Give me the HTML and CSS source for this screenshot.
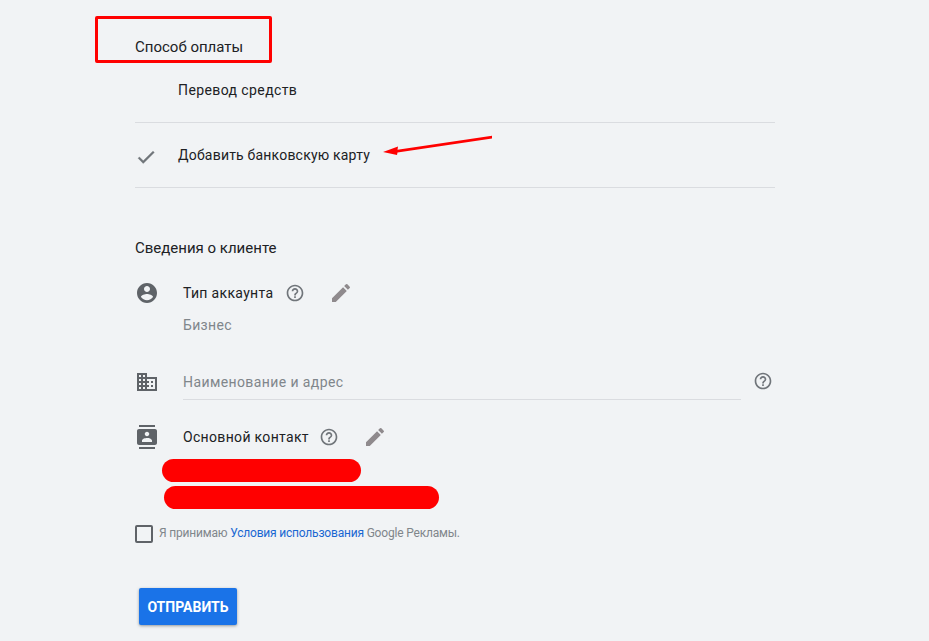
FILE: index.html
```html
<!DOCTYPE html>
<html lang="en">
  <head>
    <meta charset="UTF-8">
    <meta name="viewport" content="width=device-width, initial-scale=1.0"/>
    <title>Способ оплаты</title>
    <link rel="stylesheet" href="styles.css">
  </head>
  <body>
    <main class="page">
      <h2 class="section-title pay-title">Способ оплаты</h2>
      <div class="pay-option first">
        <span class="pay-check"></span>
        <span class="transfer-label">Перевод средств</span>
      </div>
      <div class="pay-option selected">
        <span class="pay-check">
          <svg width="22" height="22" viewBox="0 0 24 24"><path d="M9 16.2 4.8 12l-1.4 1.4L9 19 21 7l-1.4-1.4z" fill="#70757a" stroke="#70757a" stroke-width=".5"/></svg>
        </span>
        <span class="card-label">Добавить банковскую карту</span>
      </div>

      <h2 class="section-title client-title">Сведения о клиенте</h2>

      <div class="field account">
        <svg class="field-icon" width="24" height="24" viewBox="0 0 24 24"><path d="M12 2C6.48 2 2 6.48 2 12s4.48 10 10 10 10-4.48 10-10S17.52 2 12 2zm0 3c1.66 0 3 1.34 3 3s-1.34 3-3 3-3-1.34-3-3 1.34-3 3-3zm0 14.2c-2.5 0-4.71-1.28-6-3.22.03-1.99 4-3.08 6-3.08 1.99 0 5.97 1.09 6 3.08-1.29 1.94-3.5 3.22-6 3.22z" fill="#5f6368"/></svg>
        <span class="field-label">Тип аккаунта</span>
        <svg class="help" width="20" height="20" viewBox="0 0 24 24"><path d="M11 18h2v-2h-2v2zm1-16C6.48 2 2 6.48 2 12s4.48 10 10 10 10-4.48 10-10S17.52 2 12 2zm0 18c-4.41 0-8-3.59-8-8s3.59-8 8-8 8 3.59 8 8-3.59 8-8 8zm0-14c-2.21 0-4 1.79-4 4h2c0-1.1.9-2 2-2s2 .9 2 2c0 2-3 1.75-3 5h2c0-2.25 3-2.5 3-5 0-2.21-1.79-4-4-4z" fill="#70757a"/></svg>
        <svg class="edit" width="24" height="24" viewBox="0 0 24 24"><path d="M3 17.25V21h3.75L17.81 9.94l-3.75-3.75L3 17.25zM20.71 7.04a1 1 0 0 0 0-1.41l-2.34-2.34a1 1 0 0 0-1.41 0l-1.83 1.83 3.75 3.75 1.83-1.83z" fill="#8f8a8d"/></svg>
      </div>
      <p class="field-value">Бизнес</p>

      <div class="field name-row">
        <svg class="field-icon" width="24" height="24" viewBox="0 0 24 24"><path d="M12 7V3H2v18h20V7H12zM6 19H4v-2h2v2zm0-4H4v-2h2v2zm0-4H4V9h2v2zm0-4H4V5h2v2zm4 12H8v-2h2v2zm0-4H8v-2h2v2zm0-4H8V9h2v2zm0-4H8V5h2v2zm10 12h-8v-2h2v-2h-2v-2h2v-2h-2V9h8v10zm-2-8h-2v2h2v-2zm0 4h-2v2h2v-2z" fill="#5f6368"/></svg>
        <div class="name-input">Наименование и адрес</div>
        <svg class="help name-help" width="20" height="20" viewBox="0 0 24 24"><path d="M11 18h2v-2h-2v2zm1-16C6.48 2 2 6.48 2 12s4.48 10 10 10 10-4.48 10-10S17.52 2 12 2zm0 18c-4.41 0-8-3.59-8-8s3.59-8 8-8 8 3.59 8 8-3.59 8-8 8zm0-14c-2.21 0-4 1.79-4 4h2c0-1.1.9-2 2-2s2 .9 2 2c0 2-3 1.75-3 5h2c0-2.25 3-2.5 3-5 0-2.21-1.79-4-4-4z" fill="#70757a"/></svg>
      </div>

      <div class="field contact">
        <svg class="field-icon" width="24" height="24" viewBox="0 0 24 24"><path d="M20 0H4v2h16V0zM4 24h16v-2H4v2zM20 4H4c-1.1 0-2 .9-2 2v12c0 1.1.9 2 2 2h16c1.1 0 2-.9 2-2V6c0-1.1-.9-2-2-2zm-8 2.75c1.24 0 2.25 1.01 2.25 2.25s-1.01 2.25-2.25 2.25S9.75 10.24 9.75 9 10.76 6.75 12 6.75zM17 17H7v-1.5c0-1.67 3.33-2.5 5-2.5s5 .83 5 2.5V17z" fill="#5f6368"/></svg>
        <span class="field-label contact-label">Основной контакт</span>
        <svg class="help" width="20" height="20" viewBox="0 0 24 24"><path d="M11 18h2v-2h-2v2zm1-16C6.48 2 2 6.48 2 12s4.48 10 10 10 10-4.48 10-10S17.52 2 12 2zm0 18c-4.41 0-8-3.59-8-8s3.59-8 8-8 8 3.59 8 8-3.59 8-8 8zm0-14c-2.21 0-4 1.79-4 4h2c0-1.1.9-2 2-2s2 .9 2 2c0 2-3 1.75-3 5h2c0-2.25 3-2.5 3-5 0-2.21-1.79-4-4-4z" fill="#70757a"/></svg>
        <svg class="edit" width="24" height="24" viewBox="0 0 24 24"><path d="M3 17.25V21h3.75L17.81 9.94l-3.75-3.75L3 17.25zM20.71 7.04a1 1 0 0 0 0-1.41l-2.34-2.34a1 1 0 0 0-1.41 0l-1.83 1.83 3.75 3.75 1.83-1.83z" fill="#8f8a8d"/></svg>
      </div>

      <label class="terms">
        <span class="checkbox"></span>
        <span>Я принимаю <a href="#">Условия использования</a> Google Рекламы.</span>
      </label>

      <button class="submit">ОТПРАВИТЬ</button>
    </main>

    <!-- red marks drawn over the screenshot -->
    <div class="mark-box"></div>
    <div class="scribble one"></div>
    <div class="scribble two"></div>
    <svg class="mark-arrow" width="112" height="30" viewBox="0 0 112 30">
      <path d="M0 22 15 16.5 14.5 19.8 109 5.8v2.8L14.5 22.6 14 25z" fill="#f00"/>
    </svg>
  </body>
</html>
```

FILE: styles.css
```css
html, body {
  margin: 0;
  height: 641px;
  overflow: hidden;
}
body {
  background-color: #f1f3f5;
  color: #202124;
  font-family: Roboto, "Noto Sans", sans-serif;
  font-size: 14px;
  letter-spacing: 0.33px;
  position: relative;
}
.page {
  width: 640px;
  margin-left: 135px;
}
.section-title {
  margin: 0;
  font-size: 15px;
  font-weight: 400;
  line-height: 20px;
  letter-spacing: 0;
}
.pay-title {
  padding-top: 37px;
}
.pay-option {
  display: flex;
  align-items: center;
  height: 64px;
  border-bottom: 1px solid #dadce0;
}
.pay-option.first {
  height: 65px;
}
.pay-check {
  display: flex;
  width: 43px;
}
.pay-check svg {
  margin-top: 3px;
}
.transfer-label {
  letter-spacing: 0.4px;
}
.card-label {
  letter-spacing: 0.2px;
}
.client-title {
  margin-top: 50px;
}
.field {
  display: flex;
  align-items: center;
}
.field-icon {
  flex: none;
  margin-right: 24px;
}
.field-label {
  margin-right: 12px;
}
.contact-label {
  margin-right: 10px;
}
.help {
  flex: none;
}
.edit {
  flex: none;
  margin-left: 24px;
}
.account {
  margin-top: 22px;
  height: 26px;
}
.field-value {
  margin: 9px 0 0 48px;
  line-height: 20px;
  color: #80868b;
}
.name-row {
  margin-top: 30px;
  height: 44px;
  align-items: flex-start;
}
.name-row .field-icon {
  margin-top: 5px;
}
.name-input {
  width: 558px;
  height: 34px;
  line-height: 34px;
  letter-spacing: 0.4px;
  color: #80868b;
  border-bottom: 1px solid #dadce0;
}
.name-help {
  margin: 6px 0 0 12px;
}
.contact {
  margin-top: 15px;
  height: 26px;
}
.terms {
  display: flex;
  align-items: center;
  gap: 6px;
  margin-top: 72px;
  font-size: 12px;
  letter-spacing: -0.19px;
  color: #80868b;
}
.terms a {
  color: #1967d2;
  text-decoration: none;
}
.checkbox {
  flex: none;
  width: 14px;
  height: 14px;
  margin-top: 3px;
  border: 2px solid #5f6368;
  border-radius: 2px;
}
.submit {
  display: block;
  width: 98px;
  height: 37px;
  margin: 45px 0 0 4px;
  padding: 0;
  background-color: #1a73e8;
  color: #fff;
  border: none;
  border-radius: 2px;
  font-family: inherit;
  font-size: 14px;
  font-weight: 700;
  box-shadow: 0 1px 3px rgba(60, 64, 67, 0.5);
}
.mark-box {
  position: absolute;
  left: 95px;
  top: 16px;
  width: 171px;
  height: 41px;
  border: 3px solid #f00;
  border-radius: 2px;
}
.scribble {
  position: absolute;
  background-color: #f00;
  border-radius: 12px;
}
.scribble.one {
  left: 162px;
  top: 459px;
  width: 199px;
  height: 23px;
}
.scribble.two {
  left: 164px;
  top: 486px;
  width: 275px;
  height: 23px;
}
.mark-arrow {
  position: absolute;
  left: 383px;
  top: 130px;
}
```
